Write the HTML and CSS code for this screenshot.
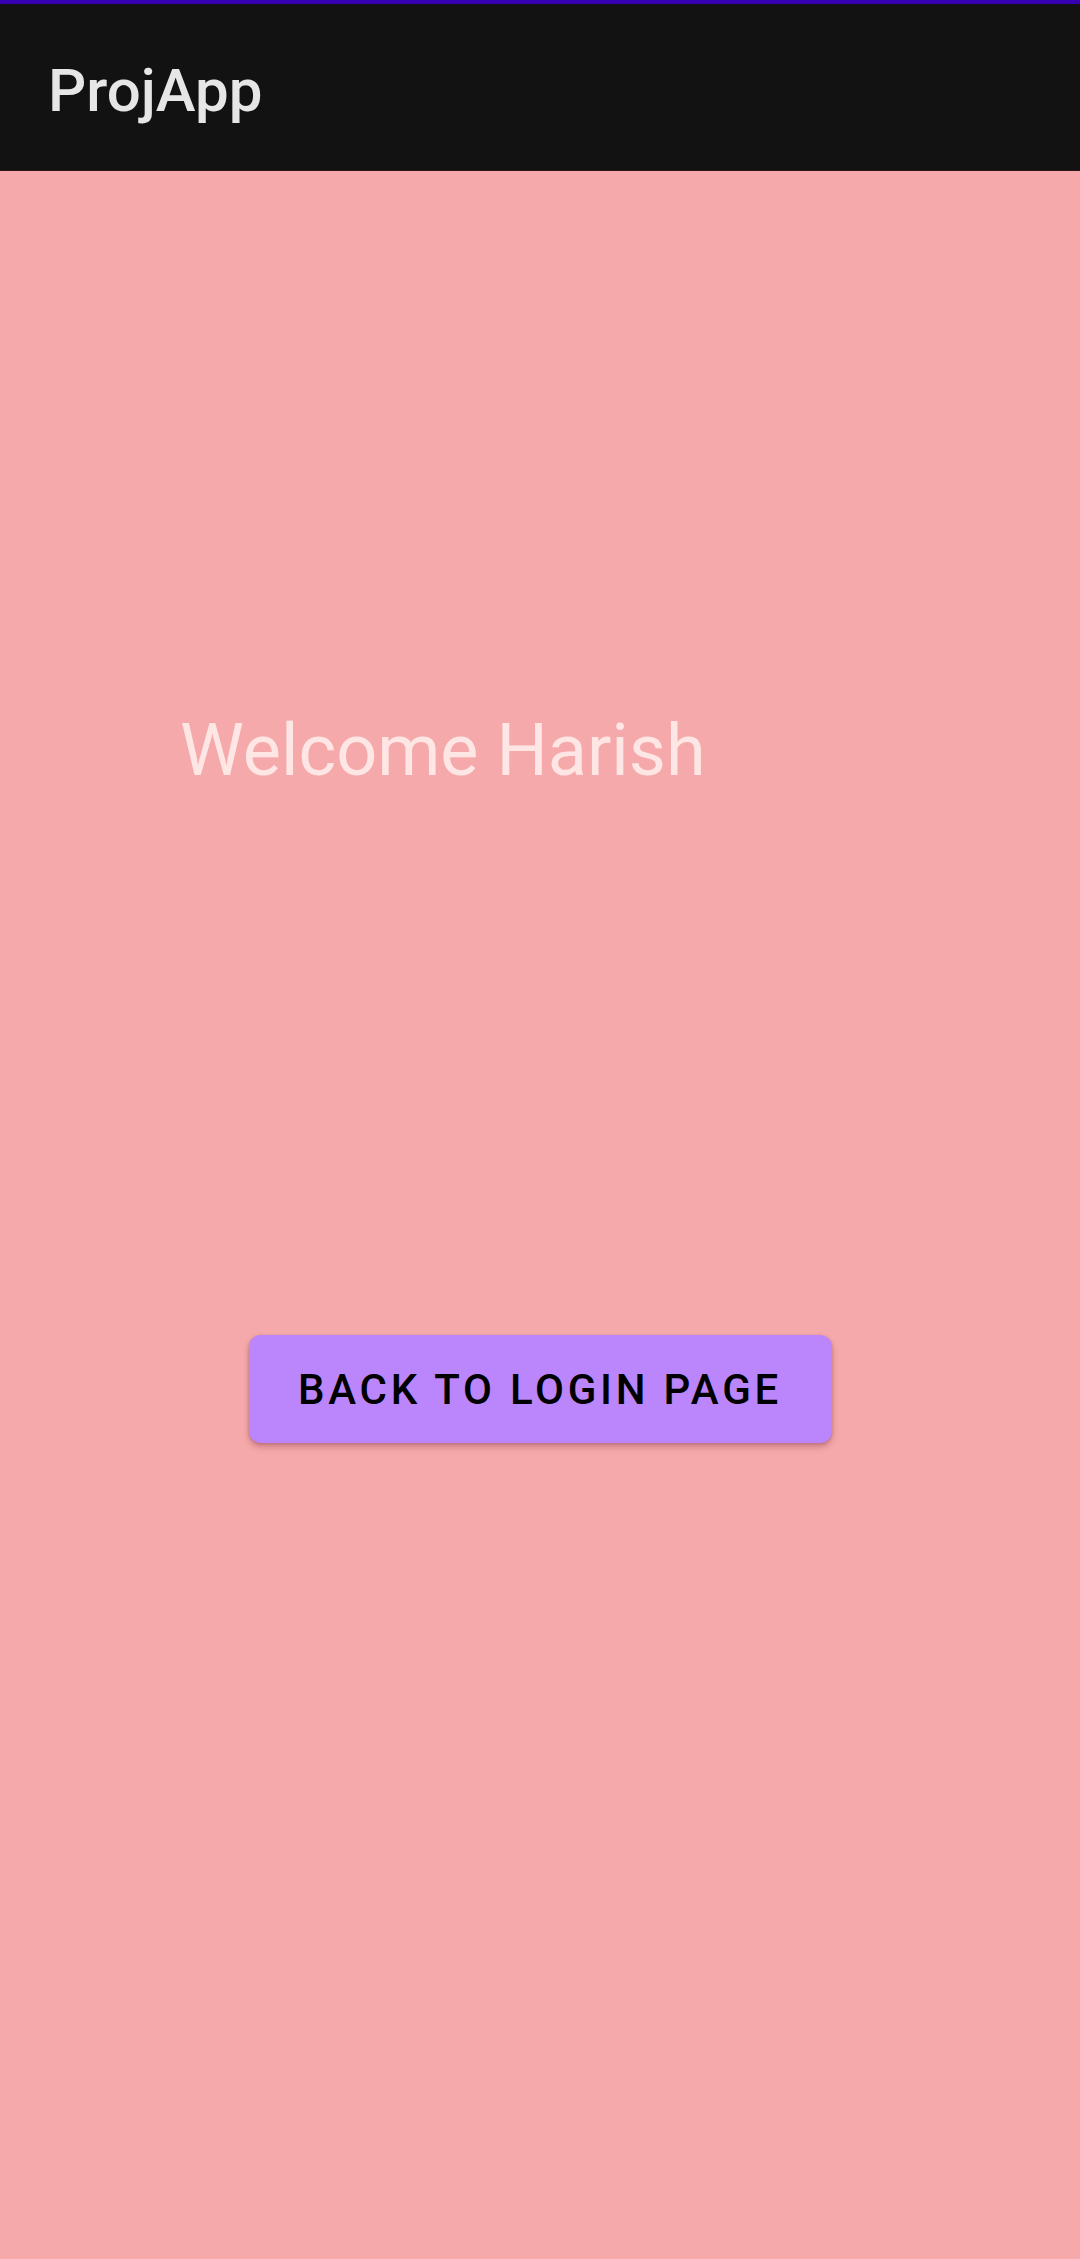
FILE: index.html
```html
<!DOCTYPE html>
<html lang="en">
<head>
<meta charset="utf-8">
<title>ProjApp</title>
<link rel="stylesheet" href="styles.css">
</head>
<body>
<div class="app">
  <header class="toolbar">
    <h1 class="title">ProjApp</h1>
  </header>
  <main class="content">
    <p class="welcome">Welcome Harish</p>
    <button class="back-btn" type="button">BACK TO LOGIN PAGE</button>
  </main>
</div>
</body>
</html>
```
FILE: styles.css
```css
html, body {
  margin: 0;
  padding: 0;
}
body {
  width: 1080px;
  height: 2259px;
  background: #f5a9aa;
  font-family: Roboto, "Noto Sans", "Liberation Sans", sans-serif;
  overflow: hidden;
}
.app {
  display: flex;
  flex-direction: column;
  min-height: 2259px;
}
.toolbar {
  height: 166px;
  border-top: 4px solid #3700b3;
  background: #121212;
  display: flex;
  align-items: flex-start;
  padding-left: 48px;
  box-sizing: content-box;
  box-shadow: 0 1px 0 #2a1416;
}
.title {
  margin: 0;
  margin-top: 52px;
  font-size: 60px;
  line-height: 70px;
  font-weight: 500;
  color: #e6e6e6;
}
.content {
  display: flex;
  flex-direction: column;
  align-items: center;
}
.welcome {
  align-self: flex-start;
  margin: 539px 0 0 180px;
  font-size: 72px;
  line-height: 84px;
  font-weight: 400;
  color: #fde6e4;
}
.back-btn {
  margin-top: 542px;
  width: 583px;
  height: 108px;
  border: none;
  border-radius: 12px;
  background: #bb86fc;
  color: #000;
  font-family: Roboto, "Noto Sans", "Liberation Sans", sans-serif;
  font-size: 42px;
  font-weight: 500;
  letter-spacing: 3.75px;
  box-shadow: 0 4px 6px rgba(120, 40, 60, 0.3), 0 1px 3px rgba(120, 40, 60, 0.25);
  padding: 0;
}
```
